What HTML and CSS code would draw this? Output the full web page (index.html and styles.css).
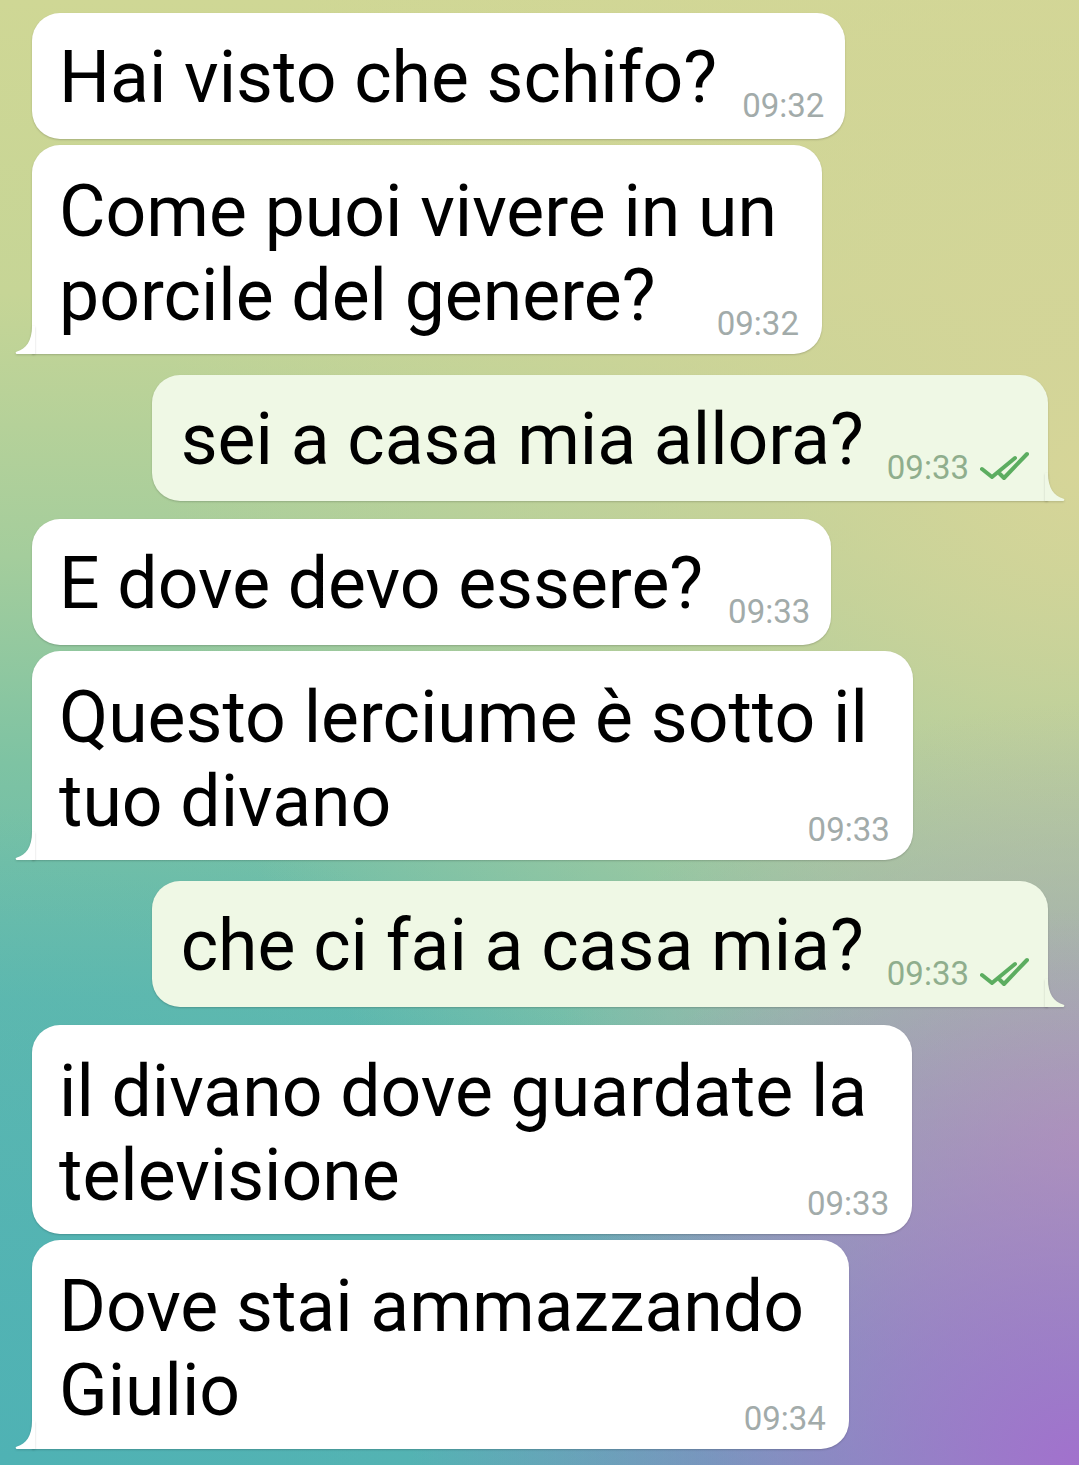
FILE: index.html
```html
<!DOCTYPE html>
<html lang="it">
<head>
  <meta charset="UTF-8" />
  <meta name="viewport" content="width=device-width, initial-scale=1.0" />
  <title>Chat</title>
  <link rel="stylesheet" href="styles.css">
</head>
<body>
  <div class="chat">
    <div class="msg in">
      <div class="bubble">
        <p class="text">Hai visto che schifo?</p>
        <span class="meta"><span class="time">09:32</span></span>
      </div>
    </div>
    <div class="msg in">
      <div class="bubble multi tail">
        <p class="text">Come puoi vivere in un<br>porcile del genere?</p>
        <span class="meta"><span class="time">09:32</span></span>
        <svg class="tail-in" width="20" height="28" viewBox="0 0 20 28"><path d="M17 0 C17 15 11 23 2 25.5 Q-0.5 26.5 1.5 28 L20 28 L20 0 Z"/></svg>
      </div>
    </div>

    <div class="msg out group">
      <div class="bubble tail">
        <p class="text">sei a casa mia allora?</p>
        <span class="meta">
          <span class="time">09:33</span>
          <svg class="ticks" width="50" height="30" viewBox="0 0 50 30"><path d="M2 18 L12 26 L35 7"/><path d="M20 23 L24 27 L47 3"/></svg>
        </span>
        <svg class="tail-out" width="20" height="28" viewBox="0 0 20 28"><path d="M3 0 C3 15 9 23 18 25.5 Q20.5 26.5 18.5 28 L0 28 L0 0 Z"/></svg>
      </div>
    </div>

    <div class="msg in group-s">
      <div class="bubble">
        <p class="text">E dove devo essere?</p>
        <span class="meta"><span class="time">09:33</span></span>
      </div>
    </div>
    <div class="msg in">
      <div class="bubble multi tail">
        <p class="text">Questo lerciume è sotto il<br>tuo divano</p>
        <span class="meta"><span class="time">09:33</span></span>
        <svg class="tail-in" width="20" height="28" viewBox="0 0 20 28"><path d="M17 0 C17 15 11 23 2 25.5 Q-0.5 26.5 1.5 28 L20 28 L20 0 Z"/></svg>
      </div>
    </div>

    <div class="msg out group">
      <div class="bubble tail">
        <p class="text">che ci fai a casa mia?</p>
        <span class="meta">
          <span class="time">09:33</span>
          <svg class="ticks" width="50" height="30" viewBox="0 0 50 30"><path d="M2 18 L12 26 L35 7"/><path d="M20 23 L24 27 L47 3"/></svg>
        </span>
        <svg class="tail-out" width="20" height="28" viewBox="0 0 20 28"><path d="M3 0 C3 15 9 23 18 25.5 Q20.5 26.5 18.5 28 L0 28 L0 0 Z"/></svg>
      </div>
    </div>

    <div class="msg in group-s">
      <div class="bubble multi">
        <p class="text">il divano dove guardate la<br>televisione</p>
        <span class="meta"><span class="time">09:33</span></span>
      </div>
    </div>
    <div class="msg in">
      <div class="bubble multi tail">
        <p class="text">Dove stai ammazzando<br>Giulio</p>
        <span class="meta"><span class="time">09:34</span></span>
        <svg class="tail-in" width="20" height="28" viewBox="0 0 20 28"><path d="M17 0 C17 15 11 23 2 25.5 Q-0.5 26.5 1.5 28 L20 28 L20 0 Z"/></svg>
      </div>
    </div>
  </div>
</body>
</html>
```

FILE: styles.css
```css
* {
  box-sizing: border-box;
}
html, body {
  margin: 0;
  padding: 0;
  min-height: 100%;
}
body {
  font-family: Roboto, "Noto Sans", sans-serif;
  color: #000;
  min-height: 1465px;
  background:
    radial-gradient(ellipse 62% 38% at 100% 100%, #a271cd 0%, rgba(162, 113, 205, 0) 100%),
    radial-gradient(ellipse 50% 30% at 100% 78%, #b3a6b2 0%, rgba(179, 166, 178, 0) 100%),
    radial-gradient(ellipse 75% 45% at 0% 100%, #4fb2b4 0%, rgba(79, 178, 180, 0) 100%),
    radial-gradient(ellipse 85% 62% at 100% 32%, #d6d598 0%, rgba(214, 213, 152, 0) 100%),
    linear-gradient(180deg, #cfd795 0%, #c6d596 20%, #a4cd9c 38%, #7ec3a3 52%, #62baad 68%, #58b4b2 100%);
}
.chat {
  display: flex;
  flex-direction: column;
  gap: 6px;
  padding: 13px 31px 16px 32px;
}
.msg {
  display: flex;
}
.msg.in {
  justify-content: flex-start;
}
.msg.out {
  justify-content: flex-end;
}
.msg.group {
  margin-top: 15px;
}
.msg.group-s {
  margin-top: 12px;
}
.bubble {
  position: relative;
  display: flex;
  align-items: flex-end;
  background: #fff;
  border-radius: 28px;
  padding: 23px 21px 19px 27px;
  box-shadow: 0 1px 2px rgba(0, 0, 0, 0.18);
}
.out .bubble {
  background: #eff8e5;
  padding-right: 18px;
  padding-left: 29px;
}
.in .bubble.tail {
  border-bottom-left-radius: 0;
}
.out .bubble.tail {
  border-bottom-right-radius: 0;
}
.text {
  margin: 0;
  font-size: 71.5px;
  line-height: 84px;
  white-space: nowrap;
}
.meta {
  display: flex;
  align-items: center;
  gap: 11px;
  margin: 0 0 -2px 25px;
  font-size: 33px;
  line-height: 33px;
  color: #a2abaa;
}
.out .meta {
  color: #8fae8d;
  margin-left: 23px;
}
.ticks {
  display: block;
  margin-top: -4px;
}
.ticks path {
  fill: none;
  stroke: #5cad60;
  stroke-width: 4;
  stroke-linecap: round;
  stroke-linejoin: round;
}
.bubble.multi {
  display: block;
  padding: 25px 45px 14px 27px;
}
.bubble.multi .meta {
  justify-content: flex-end;
  margin: -31px -22px 0 0;
}
.tail-in, .tail-out {
  position: absolute;
  bottom: 0;
  filter: drop-shadow(0 1px 1px rgba(0, 0, 0, 0.15));
}
.tail-in {
  left: -17px;
  fill: #fff;
}
.tail-out {
  right: -17px;
  fill: #eff8e5;
}
```
